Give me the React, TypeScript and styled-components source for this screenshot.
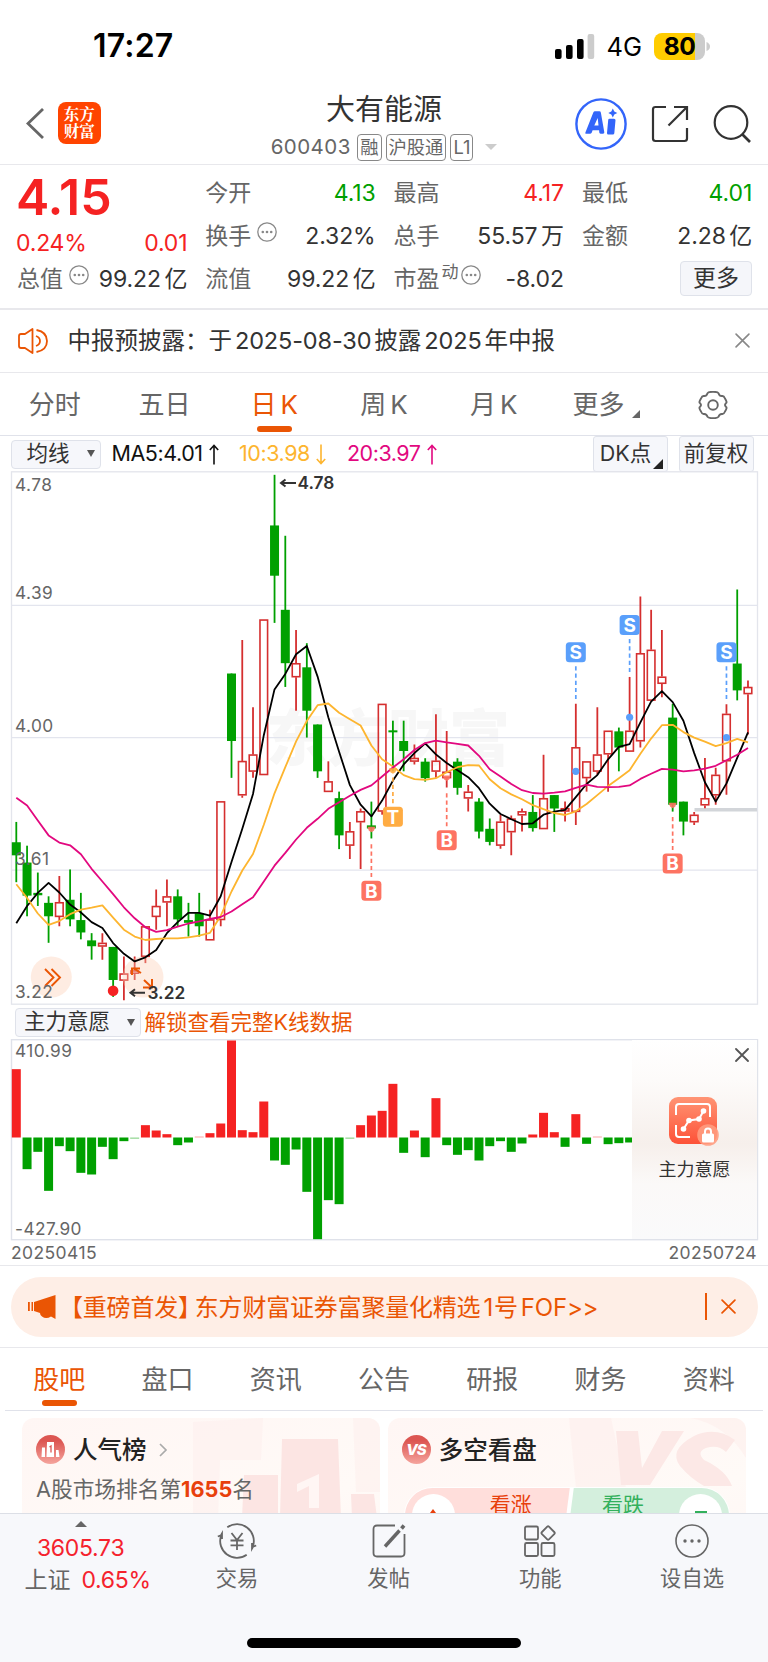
import React from "react";
import styled, { createGlobalStyle, css } from "styled-components";

const GlobalStyle = createGlobalStyle`
  *, *::before, *::after { box-sizing: border-box; }
  body { margin: 0; background: #fff; }
  svg { display: block; flex: none; }
`;

const FONT = `Inter, "Noto Sans CJK SC", sans-serif`;
const RED = "#f52222";
const GREEN = "#00a000";
const ORANGE = "#ea5504";
const GREY = "#666";
const INK = "#333";
const LINE = "#e8e8ec";

const Screen = styled.main`
  width: 768px;
  height: 1662px;
  display: flex;
  flex-direction: column;
  overflow: hidden;
  background: #fff;
  color: ${INK};
  font-family: ${FONT};
  font-size: 23px;
  line-height: 1;
  white-space: nowrap;
`;

/* ---------- status bar ---------- */
const StatusBar = styled.div`
  height: 80px;
  flex: none;
  display: flex;
  align-items: center;
  padding: 12px 58px 0 93px;
  color: #000;
`;
const Clock = styled.div`
  font-size: 32px;
  font-weight: 600;
  letter-spacing: 0.2px;
  margin-right: auto;
`;
const Network = styled.div`
  font-size: 25.5px;
  margin: 2px 12px 0 12px;
  letter-spacing: 0;
`;
const Battery = styled.div`
  width: 51px;
  height: 27px;
  border-radius: 8px;
  background: linear-gradient(90deg, #ffcc00 80%, #ccc 80%);
  font-size: 24.5px;
  font-weight: 650;
  line-height: 27px;
  text-align: center;
  letter-spacing: -0.6px;
  margin-right: 1px;
`;

/* ---------- header ---------- */
const Header = styled.header`
  height: 85px;
  flex: none;
  display: grid;
  grid-template-columns: 1fr auto 1fr;
  border-bottom: 1.5px solid ${LINE};
`;
const HeaderLeft = styled.div`
  display: flex;
  align-items: center;
  gap: 14px;
  padding: 3px 0 0 26px;
`;
const Logo = styled.div`
  width: 42.5px;
  height: 42.5px;
  margin-top: -1px;
  border-radius: 8px;
  background: #ff4400;
  color: #fff;
  font-family: "Noto Serif CJK SC", "Noto Sans CJK SC", sans-serif;
  font-weight: 700;
  font-size: 15.5px;
  line-height: 17.5px;
  text-align: center;
  padding-top: 3px;
  white-space: normal;
`;
const HeaderTitle = styled.div`
  display: flex;
  flex-direction: column;
  align-items: center;
`;
const StockName = styled.div`
  font-size: 29px;
  line-height: 36px;
  margin-top: 12px;
`;
const StockMeta = styled.div`
  display: flex;
  align-items: center;
  gap: 4px;
  margin-top: 5.5px;
  height: 27px;
  color: ${GREY};
  font-size: 20.5px;
`;
const Code = styled.span`
  letter-spacing: 0.45px;
  margin-right: 2.5px;
`;
const Tag = styled.span`
  height: 27px;
  line-height: 24px;
  padding: 0 2px;
  border: 1.3px solid #888;
  border-radius: 4px;
  font-size: 18.3px;
`;
const Caret = styled.span<{ $c?: string; $w?: number; $h?: number; $up?: boolean; $ml?: number }>`
  width: 0;
  height: 0;
  margin-left: ${(p) => p.$ml ?? 0}px;
  border-left: ${(p) => p.$w ?? 6}px solid transparent;
  border-right: ${(p) => p.$w ?? 6}px solid transparent;
  ${(p) => (p.$up ? "border-bottom" : "border-top")}: ${(p) => p.$h ?? 6}px solid ${(p) => p.$c ?? "#ccc"};
`;
const Corner = styled.span<{ $s: number; $c: string; $m: string }>`
  width: 0;
  height: 0;
  margin: ${(p) => p.$m};
  border-left: ${(p) => p.$s}px solid transparent;
  border-bottom: ${(p) => p.$s}px solid ${(p) => p.$c};
`;
const HeaderRight = styled.div`
  display: flex;
  align-items: center;
  justify-content: flex-end;
  gap: 24px;
  padding: 4px 17px 0 0;
`;

/* ---------- quote ---------- */
const Quote = styled.section`
  height: 145px;
  flex: none;
  display: grid;
  grid-template-columns: repeat(4, 170.3px);
  column-gap: 18px;
  padding: 7px 0 0 17px;
  border-bottom: 2px solid ${LINE};
`;
const QuoteColumn = styled.div`
  display: flex;
  flex-direction: column;
`;
const QuoteRow = styled.div`
  height: 43.2px;
  display: flex;
  align-items: center;
  justify-content: space-between;
`;
const PriceBlock = styled.div`
  height: 86.4px;
  color: ${RED};
`;
const Price = styled.div`
  font-size: 50px;
  font-weight: 600;
  line-height: 50px;
  letter-spacing: 0;
  margin-left: -1px;
`;
const Change = styled.div`
  display: flex;
  justify-content: space-between;
  margin: 8px 0 0 -1px;
  line-height: 26px;
  letter-spacing: -0.2px;
`;
const Label = styled.span`
  display: flex;
  align-items: center;
  gap: 6px;
  color: ${GREY};
  & > svg { margin-top: -9px; }
`;
const Sup = styled.sup`
  font-size: 17px;
  line-height: 1;
  margin: -14px -4px 0 -4px;
`;
const Value = styled.span<{ $c?: string }>`
  color: ${(p) => p.$c ?? INK};
  letter-spacing: -0.1px;
`;
const Unit = styled.span`
  margin-left: 3.5px;
`;
const MoreButton = styled.button`
  margin: -3px 0 0 auto;
  width: 72.5px;
  height: 35px;
  padding: 0;
  border: 1.5px solid #dfe2ea;
  border-radius: 4px;
  background: #f5f6fa;
  color: ${INK};
  font: 23px/30px ${FONT};
`;

/* ---------- notice ---------- */
const Notice = styled.section`
  height: 62.5px;
  flex: none;
  display: flex;
  align-items: center;
  padding: 0 18px;
  border-bottom: 1.5px solid ${LINE};
  font-size: 23.5px;
  gap: 18.5px;
`;
const NoticeText = styled.span`
  flex: 1;
  & > i { font-style: normal; margin: 0 3px; letter-spacing: -0.15px; }
`;

/* ---------- tabs ---------- */
const Tabs = styled.nav<{ $h: number; $inset?: number }>`
  height: ${(p) => p.$h}px;
  flex: none;
  display: flex;
  margin: 0 ${(p) => p.$inset ?? 0}px;
  border-bottom: 1.5px solid #e0e2ea;
`;
const Tab = styled.div<{ $active?: boolean }>`
  flex: 1;
  position: relative;
  display: flex;
  align-items: center;
  justify-content: center;
  padding-top: 2px;
  font-size: 26px;
  color: ${(p) => (p.$active ? ORANGE : GREY)};
  & > i { font-style: normal; margin-left: 4px; }
  ${(p) =>
    p.$active &&
    css`
      &::after {
        content: "";
        position: absolute;
        bottom: 3.5px;
        left: calc(50% - 17.5px);
        width: 35px;
        height: 6px;
        border-radius: 3px;
        background: ${ORANGE};
      }
    `}
`;

/* ---------- indicator bars ---------- */
const IndicatorBar = styled.div<{ $h: number; $left: number }>`
  height: ${(p) => p.$h}px;
  flex: none;
  display: flex;
  align-items: center;
  padding: 1px 14.5px 0 ${(p) => p.$left}px;
  font-size: 21.5px;
`;
const Picker = styled.div<{ $w: number; $pad: number }>`
  width: ${(p) => p.$w}px;
  height: 29px;
  display: flex;
  align-items: center;
  justify-content: space-between;
  padding: 0 5px 1px ${(p) => p.$pad}px;
  border: 1.5px solid #dfe2ea;
  border-radius: 4px;
  background: #f6f7fb;
`;
const Average = styled.span<{ $c: string; $gap: number }>`
  display: flex;
  align-items: center;
  color: ${(p) => p.$c};
  margin-left: ${(p) => p.$gap}px;
  letter-spacing: -0.45px;
  gap: 6.5px;
`;
const FlatButton = styled.div`
  width: 75px;
  height: 36px;
  margin-left: 11px;
  display: flex;
  align-items: center;
  justify-content: center;
  border: 1.5px solid #dfe2ea;
  border-radius: 3px;
  background: #f6f7fb;
`;
const Spacer = styled.span`
  flex: 1;
`;
const Unlock = styled.span`
  color: ${ORANGE};
  margin-left: 4px;
`;

/* ---------- sub chart ---------- */
const FlowPanel = styled.div`
  flex: none;
  height: 202px;
  display: flex;
  position: relative;
`;
const LockCard = styled.div`
  position: absolute;
  right: 10.5px;
  top: 1px;
  width: 126px;
  height: 199px;
  display: flex;
  flex-direction: column;
  align-items: center;
  padding: 57px 0 0 1px;
  background: linear-gradient(180deg, #fff 0%, #fdfbfa 20%, #f6efeb 52%, #fbf9f8 72%, #fafafb 100%);
  border-right: 1.5px solid #e0e3ea;
  font-size: 18px;
`;
const LockLabel = styled.span`
  margin-top: 15px;
`;
const CloseSlot = styled.div`
  position: absolute;
  right: 8px;
  top: 8px;
`;
const DateRow = styled.div`
  height: 25px;
  flex: none;
  display: flex;
  justify-content: space-between;
  align-items: center;
  padding: 0 11px 1px;
  font-size: 17.5px;
  letter-spacing: 0.4px;
  color: ${GREY};
  border-bottom: 1.5px solid ${LINE};
`;

/* ---------- promo ---------- */
const PromoWrap = styled.section`
  height: 82px;
  flex: none;
  padding: 11px 10.5px 0 11px;
  border-bottom: 1.5px solid ${LINE};
`;
const Promo = styled.div`
  height: 59.5px;
  border-radius: 30px;
  background: #feeee6;
  color: ${ORANGE};
  display: flex;
  align-items: center;
  padding: 0 22px 0 17px;
  font-size: 24px;
`;
const PromoText = styled.span`
  flex: 1;
  margin: 2px 0 0 3px;
  letter-spacing: -0.2px;
  & > b { font-weight: 400; margin-right: -7px; }
  & > i { font-style: normal; margin: 0 1px 0 3px; }
`;
const Divider = styled.span`
  width: 1.5px;
  height: 27px;
  background: ${ORANGE};
  margin-right: 14px;
`;

/* ---------- cards ---------- */
const Cards = styled.section`
  flex: 1;
  min-height: 0;
  overflow: hidden;
  display: flex;
  gap: 7.5px;
  padding: 7px 22px 0;
`;
const Card = styled.article`
  flex: 1;
  height: 180px;
  position: relative;
  overflow: hidden;
  border-radius: 12px;
  background: linear-gradient(160deg, #fff6f4, #fffaf7 60%, #fff5f3);
  padding: 17px 14px;
`;
const CardArt = styled.svg`
  position: absolute;
  right: 0;
  top: 0;
`;
const CardHead = styled.div`
  display: flex;
  align-items: center;
  height: 30px;
  position: relative;
  font-size: 24.5px;
  font-weight: 500;
  color: #222;
  & > svg:first-child { margin-right: 8px; }
  & > svg:last-child:not(:first-child) { margin-left: 12px; }
  & > span { margin-top: 2px; }
`;
const Rank = styled.div`
  position: relative;
  margin-top: 14px;
  font-size: 21.7px;
  color: ${GREY};
  & > b { color: #e8400c; letter-spacing: 0; font-weight: 650; }
`;
const Vote = styled.div`
  position: relative;
  margin: 22.5px 2px 0;
  height: 57px;
  display: flex;
  border: 1.5px solid #fff;
  border-radius: 29px;
  overflow: hidden;
  background: #fff;
`;
const VoteSide = styled.div<{ $bull?: boolean }>`
  flex: ${(p) => (p.$bull ? "0 0 165px" : "1")};
  margin-left: ${(p) => (p.$bull ? 0 : -3)}px;
  display: flex;
  flex-direction: ${(p) => (p.$bull ? "row" : "row-reverse")};
  gap: 35px;
  padding: 6px 7px;
  color: ${(p) => (p.$bull ? "#e8400c" : "#33b05c")};
  background: ${(p) => (p.$bull ? "#ffdedb" : "#d4efdd")};
  clip-path: ${(p) =>
    p.$bull ? "polygon(0 0, 100% 0, calc(100% - 7px) 100%, 0 100%)" : "polygon(7px 0, 100% 0, 100% 100%, 0 100%)"};
  font-size: 21px;
  line-height: 22px;
`;
const VoteDot = styled.span<{ $top: number }>`
  width: 43px;
  height: 43px;
  border-radius: 50%;
  background: #fff;
  display: flex;
  justify-content: center;
  padding-top: ${(p) => p.$top}px;
`;

/* ---------- bottom bar ---------- */
const BottomBar = styled.footer`
  height: 149px;
  flex: none;
  border-top: 1.5px solid #dcdfe6;
  background: #f7f8fb;
  display: flex;
  flex-wrap: wrap;
  justify-content: center;
  align-content: space-between;
`;
const IndexCell = styled.div`
  width: 161px;
  display: flex;
  flex-direction: column;
  align-items: center;
  padding-top: 7px;
  color: #f5222d;
  letter-spacing: -0.3px;
`;
const IndexLine = styled.div<{ $top?: number; $left?: number }>`
  height: 31.5px;
  line-height: 31.5px;
  margin-top: ${(p) => p.$top ?? 0}px;
  padding-left: ${(p) => p.$left ?? 0}px;
  & > span { color: ${GREY}; margin-right: 11px; letter-spacing: 0; }
`;
const NavCell = styled.div`
  width: 151.7px;
  display: flex;
  flex-direction: column;
  align-items: center;
  padding-top: 9px;
  gap: 6px;
  color: ${GREY};
  font-size: 21.3px;
  line-height: 26px;
`;
const HomeIndicator = styled.div`
  width: 274px;
  height: 10px;
  border-radius: 5px;
  background: #000;
  margin: 0 200px 14.5px;
`;

/* ---------- icons ---------- */
const Cross = ({ size, color, w = 1.8 }: { size: number; color: string; w?: number }) => (
  <svg width={size} height={size} viewBox="0 0 14 14" fill="none" stroke={color} strokeWidth={w} strokeLinecap="round">
    <path d="M1 1 13 13M13 1 1 13" />
  </svg>
);

const Hint = () => (
  <svg width="20" height="20" viewBox="0 0 20 20" fill="none" stroke="#888" strokeWidth="1.3">
    <circle cx="10" cy="10" r="9.200" />
    <g fill="#888" stroke="none">
      <circle cx="5.8" cy="10" r="1.3" />
      <circle cx="10" cy="10" r="1.3" />
      <circle cx="14.2" cy="10" r="1.3" />
    </g>
  </svg>
);

const Arrow = ({ up }: { up?: boolean }) => (
  <svg width="10" height="21" viewBox="0 0 10 21" fill="none" stroke="currentColor" strokeWidth="1.6">
    <path d={up ? "M5 20.500V1.500M.8 6 5 1.500 9.200 6" : "M5 .5V19.500M.8 15 5 19.500 9.200 15"} />
  </svg>
);

/* ---------- K-line data: [rise, high, bodyTop, bodyBottom, low] on the chart's own scale ---------- */
type Candle = [0 | 1, number, number, number, number];
const candles: Candle[] = [
  [0, 1022, 1081, 1119, 1197], [0, 1091, 1140, 1236, 1296], [0, 1169, 1228, 1235, 1266], [0, 1238, 1257, 1296, 1373],
  [1, 1179, 1255, 1298, 1325], [0, 1160, 1248, 1305, 1325], [0, 1228, 1307, 1343, 1363], [0, 1345, 1366, 1383, 1422],
  [1, 1345, 1373, 1384, 1422], [0, 1385, 1385, 1481, 1530], [1, 1413, 1462, 1483, 1540], [1, 1413, 1453, 1463, 1481],
  [1, 1325, 1325, 1414, 1432], [1, 1218, 1266, 1298, 1335], [1, 1189, 1238, 1256, 1325], [0, 1218, 1238, 1305, 1325],
  [0, 1257, 1307, 1315, 1355], [0, 1228, 1287, 1325, 1355], [1, 1277, 1305, 1366, 1366], [1, 962, 962, 1307, 1325],
  [0, 591, 591, 787, 894], [1, 494, 845, 945, 952], [1, 689, 826, 876, 894], [1, 434, 434, 886, 886],
  [0, 14, 161, 307, 444], [0, 191, 406, 561, 630], [1, 465, 561, 602, 699], [0, 503, 573, 699, 777],
  [0, 739, 739, 875, 894], [1, 846, 904, 935, 935], [0, 934, 953, 1061, 1101], [1, 1022, 1049, 1091, 1130],
  [1, 983, 991, 1023, 1159], [0, 963, 1032, 1041, 1070], [1, 679, 679, 992, 1001], [0, 728, 756, 760, 875],
  [0, 728, 787, 816, 875], [1, 797, 836, 847, 855], [0, 837, 847, 895, 905], [1, 709, 844, 876, 894],
  [1, 758, 876, 895, 922], [0, 837, 847, 923, 943], [1, 915, 934, 954, 992], [0, 953, 963, 1050, 1070],
  [0, 1012, 1042, 1080, 1090], [1, 1002, 1021, 1091, 1100], [1, 1003, 1012, 1052, 1119], [1, 983, 991, 1003, 1050],
  [0, 944, 993, 1040, 1050], [1, 827, 953, 1043, 1043], [0, 944, 944, 983, 1051], [1, 963, 982, 992, 1021],
  [1, 679, 805, 993, 1031], [1, 846, 846, 895, 934], [1, 689, 826, 876, 885], [1, 757, 757, 826, 934],
  [0, 748, 759, 806, 875], [1, 601, 757, 818, 818], [1, 367, 532, 788, 806], [1, 406, 522, 670, 670],
  [1, 465, 600, 621, 660], [0, 679, 719, 972, 992], [0, 963, 963, 1021, 1061], [1, 993, 1001, 1023, 1031],
  [1, 836, 953, 974, 982], [1, 865, 885, 945, 972], [1, 680, 708, 846, 943], [0, 347, 562, 640, 669],
  [1, 611, 630, 651, 768],
];
const ma5 = [
  1316, 1266, 1228, 1199, 1227, 1262, 1285, 1313, 1330, 1374, 1405, 1427, 1415, 1394, 1345, 1313, 1286, 1286, 1294, 1238,
  1138, 1042, 941, 770, 637, 592, 535, 511, 600, 718, 818, 915, 972, 1006, 960, 902, 855, 822, 794, 826, 851, 872, 892,
  924, 969, 999, 1014, 1028, 1026, 1001, 992, 987, 950, 912, 886, 840, 804, 796, 733, 673, 642, 674, 728, 822, 907, 963,
  910, 836, 762,
];
const ma10 = [
  1203, 1243, 1288, 1321, 1310, 1290, 1277, 1271, 1264, 1300, 1335, 1355, 1365, 1362, 1360, 1360, 1357, 1352, 1344, 1295,
  1224, 1163, 1115, 1030, 939, 863, 788, 729, 683, 678, 705, 724, 742, 800, 840, 861, 886, 898, 900, 895, 878, 863, 857,
  858, 898, 924, 942, 956, 973, 985, 996, 1002, 991, 970, 944, 918, 895, 872, 824, 780, 741, 740, 761, 777, 789, 802,
  793, 781, 791,
];
const ma20 = [
  952, 974, 1018, 1061, 1082, 1090, 1116, 1158, 1195, 1232, 1270, 1302, 1328, 1341, 1336, 1326, 1317, 1311, 1304, 1298,
  1282, 1261, 1241, 1195, 1149, 1112, 1073, 1039, 1013, 984, 965, 946, 929, 916, 890, 864, 840, 813, 793, 786, 791, 795,
  800, 830, 869, 890, 912, 930, 938, 940, 937, 933, 923, 914, 920, 921, 920, 916, 897, 882, 868, 870, 875, 872, 867,
  859, 843, 827, 807,
];
const markers = [
  { i: 52, t: "S", c: "#5a9ffb", box: 529, from: 570, to: 665, dot: 875 },
  { i: 57, t: "S", c: "#5a9ffb", box: 450, from: 491, to: 590, dot: 718 },
  { i: 66, t: "S", c: "#5a9ffb", box: 529, from: 570, to: 665, dot: 777 },
  { i: 33, t: "B", c: "#fd7362", box: 1222, from: 1087, to: 1182, dot: 1042 },
  { i: 35, t: "T", c: "#ffac43", box: 1007, from: 893, to: 968, dot: 872 },
  { i: 40, t: "B", c: "#fd7362", box: 1075, from: 939, to: 1035, dot: 893 },
  { i: 61, t: "B", c: "#fd7362", box: 1143, from: 1008, to: 1104, dot: 972 },
];

const px = (i: number) => 16.3 + i * 10.76;
const py = (v: number) => v / 2.904 - 1;
const path = (vals: number[]) => vals.map((v, i) => `${i ? "L" : "M"}${px(i).toFixed(1)} ${py(v).toFixed(1)}`).join("");

const AxisText = styled.text`
  font: 17.3px ${FONT};
  fill: ${GREY};
  letter-spacing: 0.45px;
`;
const PeakText = styled.text`
  font: 600 17.3px ${FONT};
  fill: ${INK};
`;
const MarkText = styled.text`
  font: 700 19px ${FONT};
  fill: #fff;
  text-anchor: middle;
`;
const Watermark = styled.text`
  font: 900 61px "Noto Sans CJK SC", sans-serif;
  fill: #f7f7f7;
`;

const KLine = () => (
  <svg width="768" height="534" viewBox="0 0 768 534">
    <rect x="11.5" y="0.8" width="746" height="532.4" fill="none" stroke="#e3e5ec" strokeWidth="1.3" />
    <Watermark x="266" y="290">东方财富</Watermark>
    {[134.3, 266.6, 399.1].map((y) => (
      <path key={y} d={`M11.5 ${y}H757.5`} stroke="#e3e5ee" strokeWidth="1.3" />
    ))}
    <path d="M694.5 338.8H757" stroke="#d2d5d9" strokeWidth="3.5" />
    {candles.map(([rise, hi, top, bottom, lo], i) => {
      const x = px(i);
      const h = Math.max(py(bottom) - py(top), 2);
      return rise ? (
        <g key={i} stroke="#d52f2f" fill="none">
          <path strokeWidth="1.8" d={`M${x} ${py(hi)}V${py(top)}M${x} ${py(bottom)}V${py(lo)}`} />
          <rect strokeWidth="1.6" x={x - 3.8} y={py(top) + 0.6} width="7.6" height={Math.max(h - 1.2, 1)} />
        </g>
      ) : (
        <g key={i} fill={GREEN}>
          <rect x={x - 0.9} y={py(hi)} width="1.8" height={py(lo) - py(hi)} />
          <rect x={x - 4.5} y={py(top)} width="9" height={h} />
        </g>
      );
    })}
    <circle cx="51.3" cy="506" r="20.5" fill="#fbc9ae" opacity=".36" />
    <circle cx="143" cy="506" r="20.5" fill="#fbc9ae" opacity=".36" />
    <g fill="none" strokeWidth="1.8" strokeLinejoin="round">
      <path d={path(ma5)} stroke="#000" />
      <path d={path(ma10)} stroke="#fdb52f" />
      <path d={path(ma20)} stroke="#e2087f" />
    </g>
    <path d="M45 498 53.5 506.5 45 515M51.5 498 60 506.5 51.5 515" fill="none" stroke={ORANGE} strokeWidth="1.9" />
    <path
      d="M141 502 133 497M132 504V497.5H140M144 509 151.5 516M143 516.5H152V508"
      fill="none"
      stroke={ORANGE}
      strokeWidth="2"
    />
    {markers.map((m) => (
      <g key={m.i} fill={m.c}>
        <path d={`M${px(m.i)} ${py(m.from)}V${py(m.to)}`} stroke={m.c} strokeWidth="1.7" strokeDasharray="4.2 3" />
        {m.t === "S" ? (
          <circle cx={px(m.i)} cy={py(m.dot)} r="3.6" />
        ) : (
          <path d={`M${px(m.i) - 4} ${py(m.dot) - 2}h8l-1.5 4-2.5 1.5-2.5-1.5Z`} opacity=".9" />
        )}
        <rect x={px(m.i) - 10} y={py(m.box) - 10} width="20" height="20" rx="3.5" />
        <MarkText x={px(m.i)} y={py(m.box) + 6.9}>{m.t}</MarkText>
      </g>
    ))}
    <circle cx="113.1" cy="519.7" r="5.3" fill={RED} />
    <AxisText x="15" y="20.3">4.78</AxisText>
    <AxisText x="15" y="128.3">4.39</AxisText>
    <AxisText x="15" y="260.8">4.00</AxisText>
    <AxisText x="15" y="393.8">3.61</AxisText>
    <AxisText x="15" y="526.8">3.22</AxisText>
    <path d="M281 12H296M285.5 8.5 281 12 285.5 15.5" fill="none" stroke={INK} strokeWidth="2" />
    <PeakText x="297.5" y="18.3">4.78</PeakText>
    <path d="M130.5 521.7H145M135 518.2 130.5 521.7 135 525.2" fill="none" stroke={INK} strokeWidth="2" />
    <PeakText x="147.5" y="528">3.22</PeakText>
  </svg>
);

/* Signed bar heights in thirds of a pixel; positive is inflow. */
const flow = [
  205, -95, -43, -160, -26, -41, -106, -111, -28, -65, -11, -4, 37, 21, 10, -23, -15, 3, 13, 42, 291, 22, 16, 108, -69,
  -82, -36, -163, -305, -188, -200, -4, 37, 66, 80, 161, -46, 21, -59, 118, -23, -52, -38, -69, -26, -11, -43, -18, 9, 74,
  16, -28, 70, -19, 3, -20, -17, -15,
];

const FlowChart = () => (
  <svg width="768" height="202" viewBox="0 0 768 202">
    <rect x="11.5" y="0.7" width="746" height="200" fill="none" stroke="#dfe2ea" strokeWidth="1.4" />
    {flow.map((v, i) => (
      <rect
        key={i}
        x={px(i) - 4.5}
        y={v > 0 ? 98.5 - v / 3 : 98.5}
        width="9"
        height={Math.abs(v) / 3}
        fill={v > 0 ? RED : GREEN}
        opacity={Math.abs(v) < 5 ? 0.4 : 1}
      />
    ))}
    <AxisText x="15" y="17.7">410.99</AxisText>
    <AxisText x="15" y="196">-427.90</AxisText>
  </svg>
);

type QuoteItem = { label: string; value: string; unit?: string; color?: string; hint?: boolean; dynamic?: boolean };
const quotes: QuoteItem[][] = [
  [
    { label: "今开", value: "4.13", color: GREEN },
    { label: "换手", value: "2.32%", hint: true },
    { label: "流值", value: "99.22", unit: "亿" },
  ],
  [
    { label: "最高", value: "4.17", color: RED },
    { label: "总手", value: "55.57", unit: "万" },
    { label: "市盈", value: "-8.02", hint: true, dynamic: true },
  ],
  [
    { label: "最低", value: "4.01", color: GREEN },
    { label: "金额", value: "2.28", unit: "亿" },
  ],
];

const QuoteCell = ({ label, value, unit, color, hint, dynamic }: QuoteItem) => (
  <QuoteRow>
    <Label>
      {label}
      {dynamic && <Sup>动</Sup>}
      {hint && <Hint />}
    </Label>
    <Value $c={color}>{value}{unit && <Unit>{unit}</Unit>}</Value>
  </QuoteRow>
);

export default function App() {
  return (
    <>
      <GlobalStyle />
      <Screen>
        <StatusBar>
          <Clock>17:27</Clock>
          <svg width="40" height="25" viewBox="0 0 40 25">
            <rect x="0" y="15" width="6.6" height="10" rx="2" />
            <rect x="11" y="11" width="6.6" height="14" rx="2" />
            <rect x="22" y="5" width="6.6" height="20" rx="2" />
            <rect x="32.6" y="0" width="6.6" height="25" rx="2" fill="#ccc" />
          </svg>
          <Network>4G</Network>
          <Battery>80</Battery>
          <svg width="4" height="9" viewBox="0 0 4 9"><path d="M.5 0Q4 1.5 4 4.5T.5 9Z" fill="#ccc" /></svg>
        </StatusBar>

        <Header>
          <HeaderLeft>
            <svg width="18" height="31" viewBox="0 0 18 31" fill="none" stroke="#666" strokeWidth="2.8">
              <path d="M17 1 2 15.5 17 30" />
            </svg>
            <Logo>东方<br />财富</Logo>
          </HeaderLeft>
          <HeaderTitle>
            <StockName>大有能源</StockName>
            <StockMeta>
              <Code>600403</Code>
              <Tag>融</Tag>
              <Tag>沪股通</Tag>
              <Tag>L1</Tag>
              <Caret $ml={8} />
            </StockMeta>
          </HeaderTitle>
          <HeaderRight>
            <svg width="52" height="52" viewBox="0 0 52 52" fill="#3365fa">
              <circle cx="26" cy="26" r="24.6" fill="none" stroke="#3365fa" strokeWidth="2.4" />
              <path
                fillRule="evenodd"
                d="M11 35.700Q9.900 35.700 10.400 34.500L18.300 14.500Q18.800 13.300 20 13.300H24.300Q25.700 13.300 25.900 14.700L29.300 34.300Q29.500 35.700 28 35.700H25.500Q24.400 35.700 24.300 34.600L24.100 32.300H17.600L16.800 34.600Q16.400 35.700 15.300 35.700ZM19.300 27.500H23.500L22.700 20Z"
              />
              <path d="M34.500 20.700H39Q40.600 20.700 40.500 22.200L39.300 35.200Q39.200 36.500 37.800 36.500H33.300Q31.900 36.500 32 35L33.200 22Q33.300 20.700 34.500 20.700Z" />
              <path d="M37.800 10.500 39.300 13.500 42.300 15 39.300 16.500 37.800 19.500 36.300 16.500 33.300 15 36.300 13.500Z" />
            </svg>
            <svg width="38" height="38" viewBox="0 0 38 38" fill="none" stroke="#333" strokeWidth="2.2">
              <path d="M15 2H4.5Q2 2 2 4.5V33.5Q2 36 4.5 36H33.5Q36 36 36 33.5V23M23 2H36V15M36 2 17.5 20.5" />
            </svg>
            <svg width="38" height="38" viewBox="0 0 38 38" fill="none" stroke="#333" strokeWidth="2.2">
              <circle cx="18" cy="17.5" r="16.3" />
              <path d="M29 29 37 37" strokeWidth="2.6" />
            </svg>
          </HeaderRight>
        </Header>

        <Quote>
          <QuoteColumn>
            <PriceBlock>
              <Price>4.15</Price>
              <Change><span>0.24%</span><span>0.01</span></Change>
            </PriceBlock>
            <QuoteCell label="总值" value="99.22" unit="亿" hint />
          </QuoteColumn>
          {quotes.map((col, c) => (
            <QuoteColumn key={c}>
              {col.map((q) => <QuoteCell key={q.label} {...q} />)}
              {c === 2 && <QuoteRow><MoreButton>更多</MoreButton></QuoteRow>}
            </QuoteColumn>
          ))}
        </Quote>

        <Notice>
          <svg width="31" height="26" viewBox="0 0 31 26" fill="none" stroke={ORANGE} strokeWidth="1.8" strokeLinejoin="round">
            <path d="M14.5 1V25L7 20H3Q1 20 1 18V8Q1 6 3 6H7Z" />
            <path d="M18 8Q22 9.5 22 13T18 18M18.5 2Q29 4 29 13T18.5 24" />
          </svg>
          <NoticeText>中报预披露：于<i>2025-08-30</i>披露<i>2025</i>年中报</NoticeText>
          <Cross size={15} color="#888" w={1.5} />
        </Notice>

        <Tabs $h={63.5}>
          <Tab>分时</Tab>
          <Tab>五日</Tab>
          <Tab $active>日<i>K</i></Tab>
          <Tab>周<i>K</i></Tab>
          <Tab>月<i>K</i></Tab>
          <Tab>更多<Corner $s={8} $c={GREY} $m="18px -6px 0 8px" /></Tab>
          <Tab>
            <svg width="30" height="28" viewBox="0 0 30 28" fill="none" stroke="#666" strokeWidth="1.9" strokeLinejoin="round">
              <path d="M9.500 2.200Q10.500 .8 15 .8T20.500 2.200Q21.500 5.500 24.500 5Q26 5 27 7.500Q29.500 11.500 28 12.200Q26 14 28 15.800Q29.500 16.500 27 20.500Q26 23 24.500 23Q21.500 22.500 20.500 25.800Q19.500 27.200 15 27.200T9.500 25.800Q8.500 22.500 5.500 23Q4 23 3 20.500Q.5 16.500 2 15.800Q4 14 2 12.200Q.5 11.500 3 7.500Q4 5 5.500 5Q8.500 5.500 9.500 2.200Z" />
              <circle cx="15" cy="14" r="4.8" />
            </svg>
          </Tab>
        </Tabs>

        <IndicatorBar $h={35} $left={11}>
          <Picker $w={89.5} $pad={14.5}>均线<Caret $c="#555" $w={4.3} $h={7} /></Picker>
          <Average $c="#111" $gap={11}>MA5:4.01<Arrow up /></Average>
          <Average $c="#fdb52f" $gap={20}>10:3.98<Arrow /></Average>
          <Average $c="#e2087f" $gap={20.5}>20:3.97<Arrow up /></Average>
          <Spacer />
          <FlatButton>DK点<Corner $s={10} $c="#222" $m="19px -3px 0 2px" /></FlatButton>
          <FlatButton>前复权</FlatButton>
        </IndicatorBar>

        <KLine />

        <IndicatorBar $h={34} $left={15}>
          <Picker $w={125.5} $pad={8}>主力意愿<Caret $c="#555" $w={4.3} $h={7} /></Picker>
          <Unlock>解锁查看完整K线数据</Unlock>
        </IndicatorBar>

        <FlowPanel>
          <FlowChart />
          <LockCard>
            <CloseSlot><Cross size={14} color="#555" /></CloseSlot>
            <svg width="51" height="49" viewBox="0 0 51 49">
              <defs>
                <linearGradient id="lock" x1="0" y1="0" x2="0" y2="1">
                  <stop offset="0" stopColor="#ff9474" />
                  <stop offset="1" stopColor="#fd5238" />
                </linearGradient>
              </defs>
              <rect width="48" height="47" rx="9" fill="url(#lock)" />
              <path d="M7 18V10Q7 7 10 7H38Q41 7 41 10V20M7 28V37Q7 40 10 40H21" fill="none" stroke="#fff" strokeWidth="2" />
              <path d="M14.5 32 20 23.5 30 22 34.5 14" fill="none" stroke="#fff" strokeWidth="2" />
              <g fill="#fff">
                <circle cx="14.5" cy="32" r="2.8" /><circle cx="20" cy="23.5" r="2.8" />
                <circle cx="30" cy="22" r="2.8" /><circle cx="34.5" cy="14" r="2.8" />
              </g>
              <circle cx="39" cy="38" r="10.8" fill="#ff9c80" opacity=".9" />
              <path d="M36 37V34.5Q36 31.500 39 31.5T42 34.5V37" fill="none" stroke="#fff" strokeWidth="2" />
              <rect x="33" y="36.5" width="12" height="9" rx="1.5" fill="#fff" />
            </svg>
            <LockLabel>主力意愿</LockLabel>
          </LockCard>
        </FlowPanel>
        <DateRow><span>20250415</span><span>20250724</span></DateRow>

        <PromoWrap>
          <Promo>
            <svg width="28" height="24" viewBox="0 0 28 24" fill={ORANGE}>
              <path d="M27.5 0V24L23 21.5Q18 24.5 14 21.5 12 20 12 18L6 16V7ZM0 7H1.8V16H0ZM3.5 7H5V16H3.5Z" />
            </svg>
            <PromoText><b>【重磅首发】</b>东方财富证券富聚量化精选<i>1</i>号<i>FOF&gt;&gt;</i></PromoText>
            <Divider />
            <Cross size={15} color={ORANGE} w={1.6} />
          </Promo>
        </PromoWrap>

        <Tabs $h={62.5} $inset={5}>
          {["股吧", "盘口", "资讯", "公告", "研报", "财务", "资料"].map((t, i) => (
            <Tab key={t} $active={i === 0}>{t}</Tab>
          ))}
        </Tabs>

        <Cards>
          <Card>
            <CardArt width="190" height="100" viewBox="0 0 190 100" fill="#fdeeec">
              <path d="M3 4 73 0 71 42H30L28 100H3ZM163 0H190V74H166Z" opacity=".55" />
              <path d="M92 21H148L151 100H90ZM54 57H88V100H52ZM161 76H184L187 100H162Z" fill="#fce5e3" />
              <path d="M107 66 129 56V90H119V68L107 74Z" fill="#fff6f4" />
            </CardArt>
            <CardHead>
              <svg width="29" height="29" viewBox="0 0 29 29">
                <defs>
                  <linearGradient id="badge" x1="0" y1="0" x2="0" y2="1">
                    <stop offset="0.2" stopColor="#dc5652" />
                    <stop offset="1" stopColor="#f5a49d" />
                  </linearGradient>
                </defs>
                <circle cx="14.5" cy="14.5" r="14.5" fill="url(#badge)" />
                <path d="M6 12.5H9V22H5.5ZM11 7H18V22H10.5ZM20 15H22.5L23.5 22H20Z" fill="#fff" />
                <path d="M13.5 12 15 11V17.5" fill="none" stroke="#dc5652" strokeWidth="1.3" />
              </svg>
              <span>人气榜</span>
              <svg width="9" height="14" viewBox="0 0 9 14" fill="none" stroke="#aaa" strokeWidth="1.7">
                <path d="M1 1 7 7 1 13" />
              </svg>
            </CardHead>
            <Rank>A股市场排名第<b>1655</b>名</Rank>
          </Card>
          <Card>
            <CardArt width="180" height="100" viewBox="0 0 180 100" fill="#fdeeec">
              <path d="M3 0H45L60 70H10ZM85 0H180V40Q150 -10 85 0Z" opacity=".6" />
              <path d="M50 13H72L76 50 96 13H118L84 67H55ZM169 22Q150 8 128 18 102 32 114 48 124 60 138 68H166Q160 52 138 42 130 34 140 30 152 26 160 34Z" fill="#fce8e6" />
            </CardArt>
            <CardHead>
              <svg width="29" height="29" viewBox="0 0 29 29">
                <circle cx="14.5" cy="14.5" r="14.5" fill="url(#badge)" />
                <text x="14" y="20" textAnchor="middle" fill="#fff" fontFamily="Inter, sans-serif" fontSize="15" fontWeight="800" fontStyle="italic" letterSpacing="-1">VS</text>
              </svg>
              <span>多空看盘</span>
            </CardHead>
            <Vote>
              <VoteSide $bull>
                <VoteDot $top={15}><Caret $up $c="#e8400c" $w={6} $h={8} /></VoteDot>看涨
              </VoteSide>
              <VoteSide>
                <VoteDot $top={17}><svg width="14" height="3"><path d="M1 1.5H13" stroke="#33b05c" strokeWidth="3" /></svg></VoteDot>看跌
              </VoteSide>
            </Vote>
          </Card>
        </Cards>

        <BottomBar>
          <IndexCell>
            <Caret $up $c="#666" $w={6.5} $h={6.5} />
            <IndexLine $top={6}>3605.73</IndexLine>
            <IndexLine $left={14}><span>上证</span>0.65%</IndexLine>
          </IndexCell>
          <NavCell>
            <svg width="40" height="36" viewBox="0 0 40 36" fill="none" stroke="#666" strokeWidth="1.8">
              <path d="M10.3 4.300A16.800 16.800 0 0 1 36 23.200M29.700 31.700A16.800 16.800 0 0 1 4 12.800M.8 13.500 4 12.300 5 10.500V16M39.200 22.500 36 23.700 35 25.500V20" />
              <path d="M14.500 10 20 17 25.500 10M20 17V27M13.500 17.500H26.500M13.500 22.300H26.500" />
            </svg>
            交易
          </NavCell>
          <NavCell>
            <svg width="36" height="36" viewBox="0 0 36 36" fill="none" stroke="#666" strokeWidth="1.8">
              <path d="M24 2.5H6Q2.5 2.5 2.5 6V30Q2.5 33.5 6 33.5H30Q33.5 33.5 33.5 30V11" />
              <path d="M14 23.500 28.500 7.500" strokeWidth="3.4" />
              <path d="M30.500 5.500 33 2.500" strokeWidth="3.6" />
            </svg>
            发帖
          </NavCell>
          <NavCell>
            <svg width="36" height="36" viewBox="0 0 36 36" fill="none" stroke="#666" strokeWidth="1.8">
              <rect x="3" y="3.5" width="13" height="13" rx="1.5" />
              <rect x="3" y="20" width="13" height="13" rx="1.5" />
              <rect x="19.5" y="20" width="13" height="13" rx="1.5" />
              <rect x="21" y="5" width="10.2" height="10.2" rx="1.2" transform="rotate(45 26.1 10.1)" />
            </svg>
            功能
          </NavCell>
          <NavCell>
            <svg width="36" height="36" viewBox="0 0 36 36" fill="none" stroke="#666" strokeWidth="1.6">
              <circle cx="18" cy="18" r="16" />
              <g fill="#666" stroke="none">
                <circle cx="11" cy="18" r="1.7" /><circle cx="18" cy="18" r="1.7" /><circle cx="25" cy="18" r="1.7" />
              </g>
            </svg>
            设自选
          </NavCell>
          <HomeIndicator />
        </BottomBar>
      </Screen>
    </>
  );
}
